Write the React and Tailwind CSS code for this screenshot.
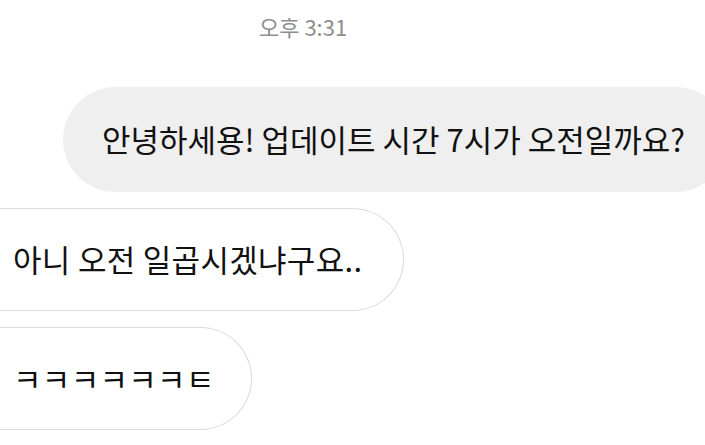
export default function App() {
    return (
        <div
            className="w-[705px] h-[445px] bg-white overflow-hidden flex flex-col"
            style={{ fontFamily: '"Noto Sans CJK KR", "Noto Sans", sans-serif' }}
        >
            {/* Timestamp */}
            <div className="pt-[13px] pl-[259px] text-[22px] leading-[26px] text-[#8e8e8e]">오후 3:31</div>

            {/* Sent message */}
            <div className="mt-[48px] ml-[63px] w-[665px] h-[105px] shrink-0 rounded-full bg-[#efefef] flex items-center pl-[39px]">
                <span className="text-[31px] text-[#111] whitespace-nowrap">
                    안녕하세용! 업데이트 시간 7시가 오전일까요?
                </span>
            </div>

            {/* Received messages */}
            <div className="mt-[16px] flex flex-col gap-[16px]">
                <Bubble width="w-[404px]">아니 오전 일곱시겠냐구요..</Bubble>
                <Bubble width="w-[252px]">ㅋㅋㅋㅋㅋㅋㅌ</Bubble>
            </div>
        </div>
    )
}

function Bubble({ width, children }) {
    return (
        <div
            className={`${width} h-[103px] shrink-0 rounded-r-full rounded-l-[12px] border-[1.5px] border-l-0 border-[#dbdbdb] flex items-center pl-[13px]`}
        >
            <span className="text-[31px] text-[#111] whitespace-nowrap tracking-[0.3px]">{children}</span>
        </div>
    )
}
